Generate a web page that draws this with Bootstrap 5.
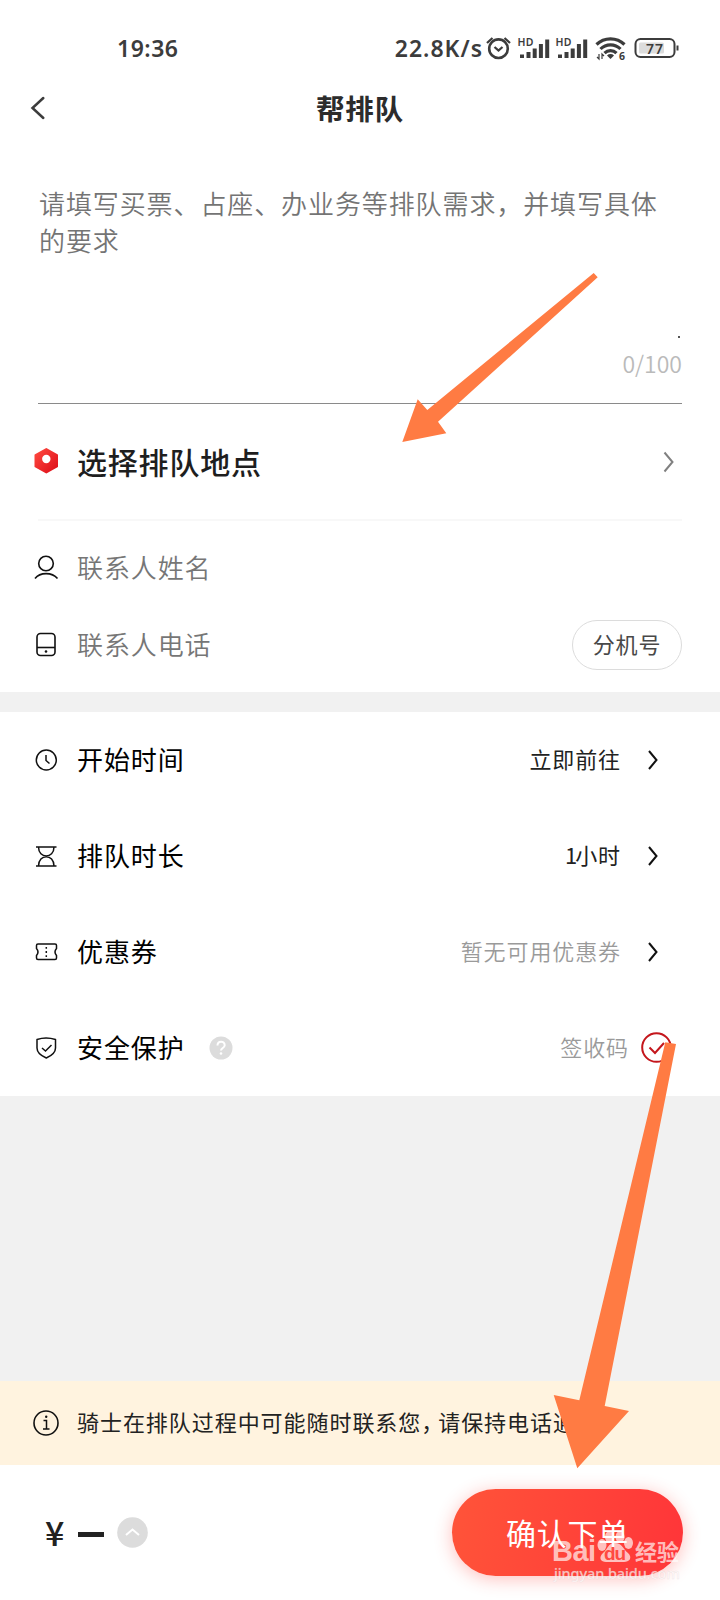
<!DOCTYPE html>
<html lang="zh-CN">
<head>
<meta charset="utf-8">
<meta name="viewport" content="width=device-width, initial-scale=1">
<title>帮排队</title>
<link href="https://cdn.jsdelivr.net/npm/bootstrap@5.3.0/dist/css/bootstrap.min.css" rel="stylesheet">
<style>
body{font-family:"Noto Sans CJK SC",sans-serif;background:#f1f1f1;color:#000;width:720px;height:1600px;overflow:hidden}
.screen{width:720px;height:1600px;overflow:hidden}
svg{display:block;flex:none}
.status{height:80px;padding:16px 40px 0 117px;font-family:"Noto Sans",sans-serif;font-weight:600;font-size:23px;line-height:64px;color:#3c3c3c}
.clock{letter-spacing:.5px}
.speed{letter-spacing:1px;margin-right:0}
.topbar{height:56px;padding:0 27px}
.topbar h1{font-size:28.5px;font-weight:700;letter-spacing:.8px;line-height:56px;color:#2c2c2c}
.side{width:24px}
.need{height:268px;margin:0 38px;padding-top:48px;border-bottom:1px solid #8a8a8a}
.hint{font-size:26px;letter-spacing:.9px;line-height:37px;color:#747474;font-weight:350;height:139px;width:644px;margin-left:1px}
.dot{width:2px;height:2px;background:#555;margin:13px 2px 0 auto}
.count{font-size:23px;line-height:30px;color:#bababa;font-weight:350;margin-top:10px}
.place{height:117px;margin:0 38px;border-bottom:2px solid #f8f8f8}
.place .txt{font-size:30px;letter-spacing:.8px;font-weight:500;color:#1e1e1e}
.ic{width:40px;margin-left:-12px;margin-right:11px}
.people{padding:8px 0 9px}
.contact{height:77px;margin:0 38px;font-size:26px;letter-spacing:.9px;color:#767676;font-weight:350}
.contact>span,.opt>span{padding-bottom:3px}
.ext{width:110px;height:50px;border:1px solid #dcdcdc;font-size:22px;letter-spacing:.9px;color:#484848;padding:0 0 2px;background:#fff}
.options{margin-top:20px}
.opt{height:96px;margin:0 38px;font-size:26px;letter-spacing:.9px}
.val{font-size:22px;letter-spacing:.9px;color:#222;margin-right:-1px}
.num{margin-right:-3px}
.pale{color:#9a9a9a;font-weight:350}
.tip{height:84px;background:#fff3df;padding:0 0 0 33px;font-size:22px;letter-spacing:.95px;color:#222}
.tiptxt{margin-left:18px;padding-bottom:3px}
.cm{margin-right:-6px}
.q{margin-left:24px}
.foot{height:135px;padding:0 37px 0 45px}
.yen{font-size:34px;line-height:40px;font-weight:500;color:#222;width:22px;padding-bottom:2px}
.dash{width:26px;height:5px;background:#222;margin:4px 13px 0 11px}
.go{width:231px;height:87px;border:0;border-radius:44px;background:linear-gradient(100deg,#ff5439,#ff3539);box-shadow:0 3px 18px rgba(255,60,50,.32);color:#fff;font-size:30px;letter-spacing:.8px;padding:0}
.overlay{position:absolute;left:0;top:0;pointer-events:none}
</style>
</head>
<body>
<main class="screen position-relative d-flex flex-column">
<section class="bg-white">
<div class="status d-flex align-items-center justify-content-between">
<span class="clock">19:36</span>
<div class="d-flex align-items-center">
<span class="speed">22.8K/s</span>
<svg width="197" height="30" viewBox="483 33 197 30" fill="none" stroke="#3c3c3c">
<circle cx="498.500" cy="48.700" r="9.300" stroke-width="2.600"/><path d="M494.500 47l4 3.500 4-3.500M487 43l5.500-5M510 43l-5.500-5" stroke-width="2.300"/>
<g id="sig"><path d="M522 58v-3.500M528.500 58v-6M534.700 58v-9.500M540.900 58v-14M547.200 58v-18.500" stroke-width="4"/><text x="517.500" y="46.300" font-size="10.500" font-weight="600" fill="#3c3c3c" stroke="none" font-family="Noto Sans" textLength="16">HD</text></g>
<use href="#sig" x="38"/>
<path d="M596.500 44.500a20 20 0 0 1 28 0M600.500 49a14 14 0 0 1 20 0M604.500 53.200a8.500 8.500 0 0 1 12 0" stroke-width="3.200"/><path d="M607 55.500a5 5 0 0 1 7 0l-3.500 3.500z" fill="#3c3c3c" stroke="none"/><path d="M599 54v5l-2-2M602 59v-5l2 2" stroke-width="1.200"/><text x="619" y="60" font-size="10.500" font-weight="700" fill="#3c3c3c" stroke="none" font-family="Noto Sans">6</text>
<rect x="635.500" y="39" width="39" height="18" rx="5" stroke-width="2"/><rect x="639" y="42.500" width="25" height="11" rx="1.500" fill="#dcdcdc" stroke="none"/><path d="M677.500 45.500v5" stroke-width="2"/><text x="646" y="53.500" font-size="14" font-weight="600" fill="#3c3c3c" stroke="none" font-family="Noto Sans" textLength="17">77</text>
</svg>
</div>
</div>
<header class="topbar d-flex align-items-center justify-content-between">
<svg class="side" width="24" height="26" viewBox="27 95 24 26"><path d="M43.300 98L32.500 108 43.300 118" fill="none" stroke="#3c3c3c" stroke-width="2.500" stroke-linecap="round"/></svg>
<h1 class="m-0">帮排队</h1><span class="side"></span>
</header>
<div class="need">
<div class="hint">请填写买票、占座、办业务等排队需求，并填写具体的要求</div>
<div class="dot"></div>
<div class="count text-end">0/100</div>
</div>
<div class="place d-flex align-items-center">
<svg class="ic" width="40" height="40" viewBox="26 442 40 40"><defs><linearGradient id="rd" x1="0" y1="0" x2="1" y2="1"><stop offset="0" stop-color="#ff4a40"/><stop offset="1" stop-color="#dd0d18"/></linearGradient></defs><path d="M46.300 449L57 455V466.500L46.300 472.500 35.500 466.500V455z" fill="url(#rd)" stroke="url(#rd)" stroke-width="2" stroke-linejoin="round"/><circle cx="46.300" cy="459" r="4.200" fill="#fff"/></svg>
<span class="txt">选择排队地点</span>
<svg class="ms-auto" width="24" height="26" viewBox="658 449 24 26"><path d="M664.500 452.500l8 9.500-8 9.500" fill="none" stroke="#808080" stroke-width="2"/></svg>
</div>
<div class="people">
<div class="contact d-flex align-items-center">
<svg class="ic" width="40" height="40" viewBox="26 548 40 40" fill="none" stroke="#111" stroke-width="1.600"><circle cx="46" cy="563.500" r="7.300"/><path d="M35 578.500C40 572 52 572 57.500 578.500"/></svg>
<span>联系人姓名</span></div>
<div class="contact d-flex align-items-center">
<svg class="ic" width="40" height="40" viewBox="26 625 40 40" fill="none" stroke="#111" stroke-width="1.600"><rect x="37" y="633.500" width="18" height="22" rx="3.500"/><path d="M37 647.500h18"/><circle cx="46" cy="651.500" r="1.300" fill="#111" stroke="none"/></svg>
<span>联系人电话</span><button class="btn ext rounded-pill ms-auto">分机号</button></div>
</div>
</section>
<section class="bg-white options">
<div class="opt d-flex align-items-center">
<svg class="ic" width="40" height="40" viewBox="26 740 40 40" fill="none" stroke="#111" stroke-width="1.500"><circle cx="46.300" cy="760" r="10"/><path d="M46 755v5.500l3.500 3"/></svg>
<span>开始时间</span><span class="val ms-auto">立即前往</span><svg class="chev" width="62" height="24" viewBox="620 748 62 24"><path d="M649 751l7.500 9-7.500 9" fill="none" stroke="#111" stroke-width="2"/></svg></div>
<div class="opt d-flex align-items-center">
<svg class="ic" width="40" height="40" viewBox="26 836 40 40" fill="none" stroke="#111" stroke-width="1.500"><path d="M36 847h20.500M36 866h20.500M38.500 847C38.500 859 54 859 54 847M38.500 866C38.500 853.500 54 853.500 54 866"/></svg>
<span>排队时长</span><span class="val ms-auto"><span class="num">1</span>小时</span><svg class="chev" width="62" height="24" viewBox="620 748 62 24"><path d="M649 751l7.500 9-7.500 9" fill="none" stroke="#111" stroke-width="2"/></svg></div>
<div class="opt d-flex align-items-center">
<svg class="ic" width="40" height="40" viewBox="26 932 40 40" fill="none" stroke="#111" stroke-width="1.500"><path d="M38 944H55Q56.500 944 56.500 945.500V948.500Q53.500 952 56.500 955.500V958Q56.500 959.500 55 959.500H38Q36.500 959.500 36.500 958V955.500Q39.500 952 36.500 948.500V945.500Q36.500 944 38 944z"/><path d="M46.300 947v10" stroke-dasharray="1.800 2.300"/></svg>
<span>优惠券</span><span class="val pale ms-auto">暂无可用优惠券</span><svg class="chev" width="62" height="24" viewBox="620 748 62 24"><path d="M649 751l7.500 9-7.500 9" fill="none" stroke="#111" stroke-width="2"/></svg></div>
<div class="opt d-flex align-items-center">
<svg class="ic" width="40" height="40" viewBox="26 1028 40 40" fill="none" stroke="#111" stroke-width="1.500"><path d="M37 1039.500Q46 1036.500 55.500 1039.500V1048Q55.500 1054 46.300 1058 37 1054 37 1048z" stroke-linejoin="round"/><path d="M42 1048l3.500 3 6-6"/></svg>
<span>安全保护</span>
<svg class="q" width="24" height="24" viewBox="0 0 24 24"><circle cx="12" cy="12" r="11.500" fill="#dcdcdc"/><path d="M8.500 9.500C8.500 4.500 15.700 4.500 15.700 9.300 15.700 12 12 12 12 14.500" fill="none" stroke="#fff" stroke-width="2"/><circle cx="12" cy="17.500" r="1.300" fill="#fff"/></svg>
<span class="val pale ms-auto">签收码</span><svg width="54" height="34" viewBox="628 1031 54 34" fill="none" stroke="#c4161c"><circle cx="656.500" cy="1047.500" r="14.300" stroke-width="2"/><path d="M649.500 1047.500l5.500 5.500 9-10" stroke-width="2"/></svg></div>
</section>
<div class="flex-grow-1"></div>
<div class="tip d-flex align-items-center">
<svg width="26" height="26" viewBox="0 0 26 26" fill="none" stroke="#111"><circle cx="13" cy="13" r="12" stroke-width="1.600"/><path d="M10.500 10.500h3v8.500M10 19h6.500" stroke-width="1.500"/><circle cx="13.200" cy="6.800" r="1.200" fill="#111" stroke="none"/></svg>
<span class="tiptxt">骑士在排队过程中可能随时联系您<span class="cm">，</span>请保持电话通畅</span>
</div>
<footer class="foot bg-white d-flex align-items-center">
<span class="yen">¥</span><span class="dash"></span>
<svg width="31" height="31" viewBox="0 0 31 31"><circle cx="15.500" cy="15.500" r="15.300" fill="#dcdcdc"/><path d="M9 18l6.500-5.500 6.500 5.500" fill="none" stroke="#fff" stroke-width="2"/></svg>
<button class="btn go ms-auto">确认下单</button>
</footer>
<svg class="overlay" width="720" height="1600" viewBox="0 0 720 1600">
<g fill="#fff" fill-opacity=".68" font-family="'Noto Sans CJK SC',sans-serif">
<text x="552" y="1561" font-size="29" font-weight="700" textLength="44" font-family="Liberation Sans">Bai</text>
<ellipse cx="602" cy="1545" rx="4.500" ry="6"/><ellipse cx="609.500" cy="1537" rx="4.500" ry="6"/><ellipse cx="620" cy="1537" rx="4.500" ry="6"/><ellipse cx="628.500" cy="1543" rx="4.500" ry="6"/>
<path d="M615 1543c7 0 8 6 13 10 5 5 1 9-4 9h-18c-5 0-8-4-3-9 5-4 5-10 12-10z"/>
<text x="635" y="1560" font-size="22" font-weight="600" textLength="44">经验</text>
<text x="554" y="1579" font-size="14.500" font-weight="500" textLength="126" font-family="Noto Sans" stroke="#d8c8c8" stroke-opacity=".4" stroke-width=".5">jingyan.baidu.com</text>
</g>
<text x="604" y="1560" font-size="19" font-weight="700" fill="#ff4a42" textLength="22" font-family="Liberation Sans">du</text>
<g fill="#ff7b43"><path d="M593.700 273L597.700 277.300 438 421.700 446.300 433.300 402.300 442 417.700 399.300 427.300 410z"/><path d="M665.300 1042.300L676 1044 604.700 1406 629 1411 577.300 1468.300 553.700 1395 579.300 1400.300z"/></g>
</svg>
</main>
<script src="https://cdn.jsdelivr.net/npm/bootstrap@5.3.0/dist/js/bootstrap.bundle.min.js"></script>
</body>
</html>
